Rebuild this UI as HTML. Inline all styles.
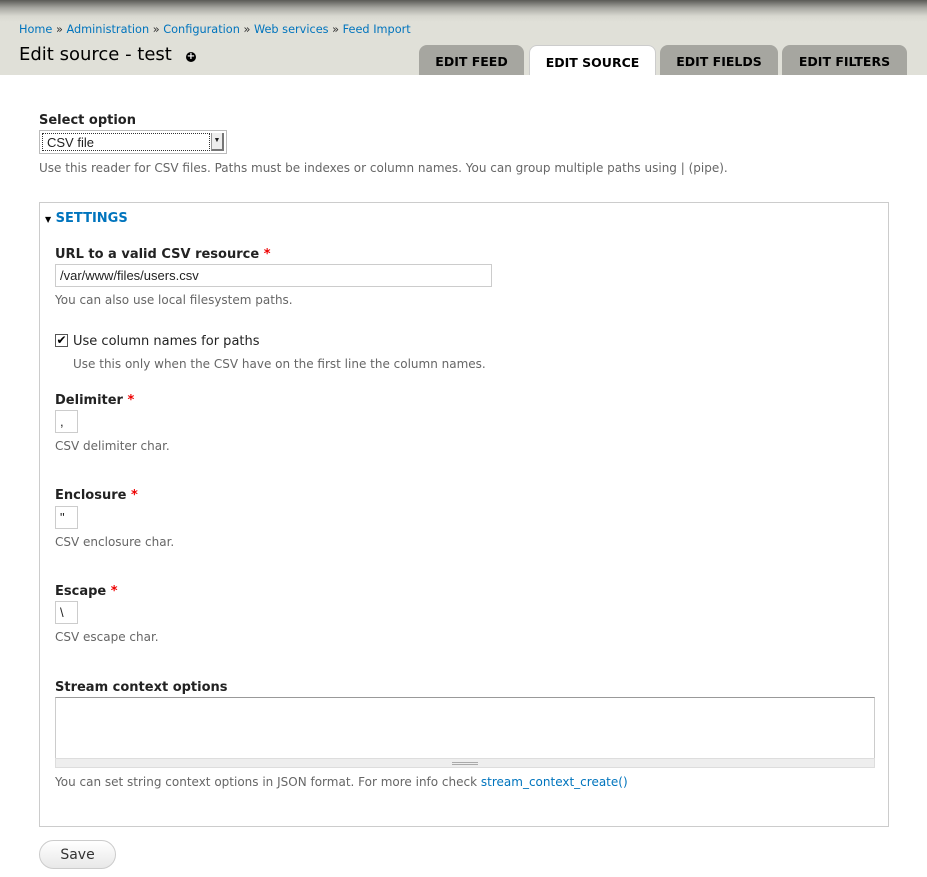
<!DOCTYPE html>
<html><head><meta charset="utf-8"><style>
*{margin:0;padding:0;box-sizing:border-box}
body{width:927px;height:877px;background:#fff;font-family:"DejaVu Sans","Liberation Sans",sans-serif;color:#333;position:relative;overflow:hidden}
.a{position:absolute;white-space:nowrap}
#hdr{position:absolute;left:0;top:0;width:927px;height:75px;background:linear-gradient(#5a5a56 0px,#a8a8a2 8px,#d8d8d0 16px,#e0e0d8 22px,#e0e0d8 75px)}
.crumb{font-size:11.3px;color:#0074bd}
.crumb span{color:#333}
.tab{position:absolute;top:45px;height:30px;background:#a6a6a0;border-radius:8px 8px 0 0;font-weight:bold;font-size:12.5px;color:#000;text-align:center;line-height:33px}
.tab.on{background:#fff;border:1px solid #ccc;border-bottom:none}
.lbl{font-weight:bold;font-size:13px;color:#222}
.req{color:#e00}
.desc{font-size:12px;color:#666}
.inp{position:absolute;border:1px solid #ccc;background:#fff;font-size:13px;color:#222;font-family:"Liberation Sans",sans-serif;padding-left:4px}
</style></head><body>
<div id="hdr"></div>
<div class="a crumb" style="left:19px;top:23px">Home <span>»</span> Administration <span>»</span> Configuration <span>»</span> Web services <span>»</span> Feed Import</div>
<div class="a" style="left:19px;top:44px;font-size:18px;color:#000">Edit source - test</div>
<div class="a" style="left:186px;top:52px;width:10px;height:10px;border-radius:50%;background:#000;color:#fff;font-size:10px;line-height:10px;text-align:center;font-weight:bold">+</div>
<div class="tab" style="left:419px;width:105px">EDIT FEED</div>
<div class="tab on" style="left:529px;width:127px">EDIT SOURCE</div>
<div class="tab" style="left:660px;width:118px">EDIT FIELDS</div>
<div class="tab" style="left:782px;width:125px">EDIT FILTERS</div>

<div class="a lbl" style="left:39px;top:113px">Select option</div>
<div class="inp" style="left:39px;top:130px;width:188px;height:24px;border-color:#bbb;padding:2px"><div style="border:1px dotted #333;height:18px;width:168px;padding-left:4px;line-height:17px">CSV file</div><div style="position:absolute;right:2px;top:2px;width:13px;height:18px;background:#eee;border-left:1px solid #999;border-right:2px solid #777;border-bottom:2px solid #777;font-size:7px;text-align:center;line-height:16px">▼</div></div>
<div class="a desc" style="left:39px;top:161px">Use this reader for CSV files. Paths must be indexes or column names. You can group multiple paths using | (pipe).</div>

<div style="position:absolute;left:39px;top:202px;width:850px;height:625px;border:1px solid #ccc"></div>
<div class="a" style="left:45px;top:211px;font-size:13px;font-weight:bold;color:#0074bd"><span style="font-size:8px;color:#000">▼</span> SETTINGS</div>

<div class="a lbl" style="left:55px;top:247px">URL to a valid CSV resource <span class="req">*</span></div>
<div class="inp" style="left:55px;top:264px;width:437px;height:23px;line-height:21px">/var/www/files/users.csv</div>
<div class="a desc" style="left:55px;top:293px">You can also use local filesystem paths.</div>

<div class="a" style="left:55px;top:334px;width:13px;height:13px;border:1px solid #555;background:#fff;font-size:12px;line-height:11px;text-align:center;color:#000">✔</div>
<div class="a" style="left:73px;top:334px;font-size:13px;color:#222">Use column names for paths</div>
<div class="a desc" style="left:73px;top:357px">Use this only when the CSV have on the first line the column names.</div>

<div class="a lbl" style="left:55px;top:393px">Delimiter <span class="req">*</span></div>
<div class="inp" style="left:55px;top:410px;width:23px;height:23px;line-height:21px">,</div>
<div class="a desc" style="left:55px;top:439px">CSV delimiter char.</div>

<div class="a lbl" style="left:55px;top:488px">Enclosure <span class="req">*</span></div>
<div class="inp" style="left:55px;top:506px;width:23px;height:23px;line-height:21px">"</div>
<div class="a desc" style="left:55px;top:535px">CSV enclosure char.</div>

<div class="a lbl" style="left:55px;top:584px">Escape <span class="req">*</span></div>
<div class="inp" style="left:55px;top:601px;width:23px;height:23px;line-height:21px">\</div>
<div class="a desc" style="left:55px;top:630px">CSV escape char.</div>

<div class="a lbl" style="left:55px;top:680px">Stream context options</div>
<div class="inp" style="left:55px;top:697px;width:820px;height:62px;border-top-color:#999"></div>
<div class="a" style="left:55px;top:758px;width:820px;height:10px;background:#eee;border:1px solid #ddd"><div style="margin:3px auto 0;width:26px;height:3px;border-top:1px solid #aaa;border-bottom:1px solid #aaa"></div></div>
<div class="a desc" style="left:55px;top:775px">You can set string context options in JSON format. For more info check <span style="color:#0074bd">stream_context_create()</span></div>

<div class="a" style="left:39px;top:840px;width:77px;height:29px;border:1px solid #ccc;border-radius:15px;background:linear-gradient(#fff,#e8e8e8);font-size:14px;color:#333;text-align:center;line-height:28px">Save</div>
</body></html>
